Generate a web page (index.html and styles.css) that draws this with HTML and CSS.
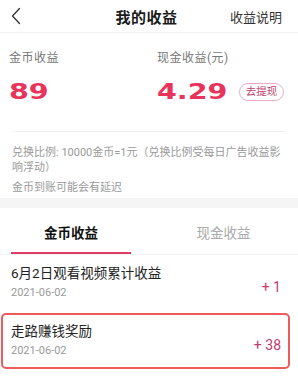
FILE: index.html
```html
<!DOCTYPE html>
<html>
<head>
<meta charset="utf-8">
<link rel="stylesheet" href="styles.css">
</head>
<body>
<div class="page">
  <header class="topbar">
    <div class="back">
      <svg width="10" height="18" viewBox="0 0 10 18"><path d="M8.5 1.5 L1.5 9 L8.5 16.5" fill="none" stroke="#333" stroke-width="1.3" stroke-linecap="round" stroke-linejoin="round"/></svg>
    </div>
    <div class="title">我的收益</div>
    <div class="help">收益说明</div>
  </header>

  <section class="stats">
    <div class="stat">
      <div class="label">金币收益</div>
      <div class="value-row"><span class="value">89</span></div>
    </div>
    <div class="stat">
      <div class="label">现金收益(元)</div>
      <div class="value-row"><span class="value">4.29</span><span class="withdraw">去提现</span></div>
    </div>
  </section>

  <section class="notes">
    <p class="note">兑换比例: 10000金币=1元（兑换比例受每日广告收益影响浮动）</p>
    <p class="note">金币到账可能会有延迟</p>
  </section>

  <div class="band"></div>

  <nav class="tabs">
    <div class="tab active">金币收益</div>
    <div class="tab">现金收益</div>
  </nav>

  <ul class="list">
    <li class="item">
      <div class="info">
        <div class="name">6月2日观看视频累计收益</div>
        <div class="date">2021-06-02</div>
      </div>
      <div class="amount">+ 1</div>
    </li>
    <li class="item highlight">
      <div class="info">
        <div class="name">走路赚钱奖励</div>
        <div class="date">2021-06-02</div>
      </div>
      <div class="amount">+ 38</div>
    </li>
  </ul>
</div>
</body>
</html>
```

FILE: styles.css
```css
* { box-sizing: border-box; }
html, body { margin: 0; padding: 0; background: #fff; }
body {
  font-family: Roboto, "Noto Sans CJK SC", sans-serif;
  color: #222;
  width: 298px;
  overflow: hidden;
}
.topbar {
  height: 33px;
  display: grid;
  grid-template-columns: 1fr auto 1fr;
  align-items: center;
  border-bottom: 1px solid #f2f2f2;
  padding: 0 16px 0 11px;
}
.back { display: flex; align-items: center; }
.title { font-size: 15px; font-weight: 700; color: #1a1a1a; letter-spacing: 0.5px; }
.help { justify-self: end; font-size: 13px; color: #333; }

.stats {
  display: grid;
  grid-template-columns: 148px 1fr;
  padding: 17px 0 0 9px;
}
.label { font-size: 12px; color: #777; letter-spacing: 0.5px; line-height: 16px; }
.value-row { display: flex; align-items: center; margin-top: 14px; height: 24px; }
.value {
  display: inline-block;
  font-family: "DejaVu Sans", sans-serif;
  font-size: 21px;
  line-height: 22px;
  font-weight: 700;
  color: #e8345a;
  transform: scaleX(1.36);
  transform-origin: left center;
}
.withdraw {
  margin-left: 30px;
  font-size: 10.5px;
  color: #c2416b;
  border: 1px solid #e8aebf;
  border-radius: 9px;
  padding: 1px 6px;
  line-height: 14px;
}

.notes {
  margin: 27px 12px 0 12px;
  border-top: 1px solid #f0f0f0;
  padding-top: 14px;
  padding-bottom: 2px;
}
.note {
  margin: 0 0 6px 0;
  font-size: 11px;
  line-height: 14.5px;
  color: #9a9a9a;
}
.note:last-child { margin-bottom: 0; }
.band { height: 10px; background: #f5f5f5; }

.tabs {
  display: grid;
  grid-template-columns: 1fr 1fr;
  border-bottom: 1px solid #f2f2f2;
  padding: 0 10px;
}
.tab {
  text-align: center;
  font-size: 13.5px;
  color: #aaa;
  padding: 14px 0 10px;
  border-bottom: 2px solid transparent;
  margin: 0 18px 0 1px;
}
.tab:last-child { margin: 0 0 0 10px; }
.tab.active { color: #111; font-weight: 700; border-bottom-color: #e23c66; }

.list { list-style: none; margin: 0; padding: 0 8px 0 1px; }
.item {
  height: 56px;
  display: flex;
  align-items: center;
  justify-content: space-between;
  padding: 0 7px 0 8px;
  border: 2px solid transparent;
  border-radius: 5px;
  margin-bottom: 2px;
}
.name { font-size: 13.5px; color: #222; line-height: 18px; }
.date { font-size: 11px; color: #999; line-height: 16px; margin-top: 3px; }
.amount { font-size: 14px; color: #c8376a; margin-top: 8px; }
.highlight { border-color: #ef5a5a; }
```
